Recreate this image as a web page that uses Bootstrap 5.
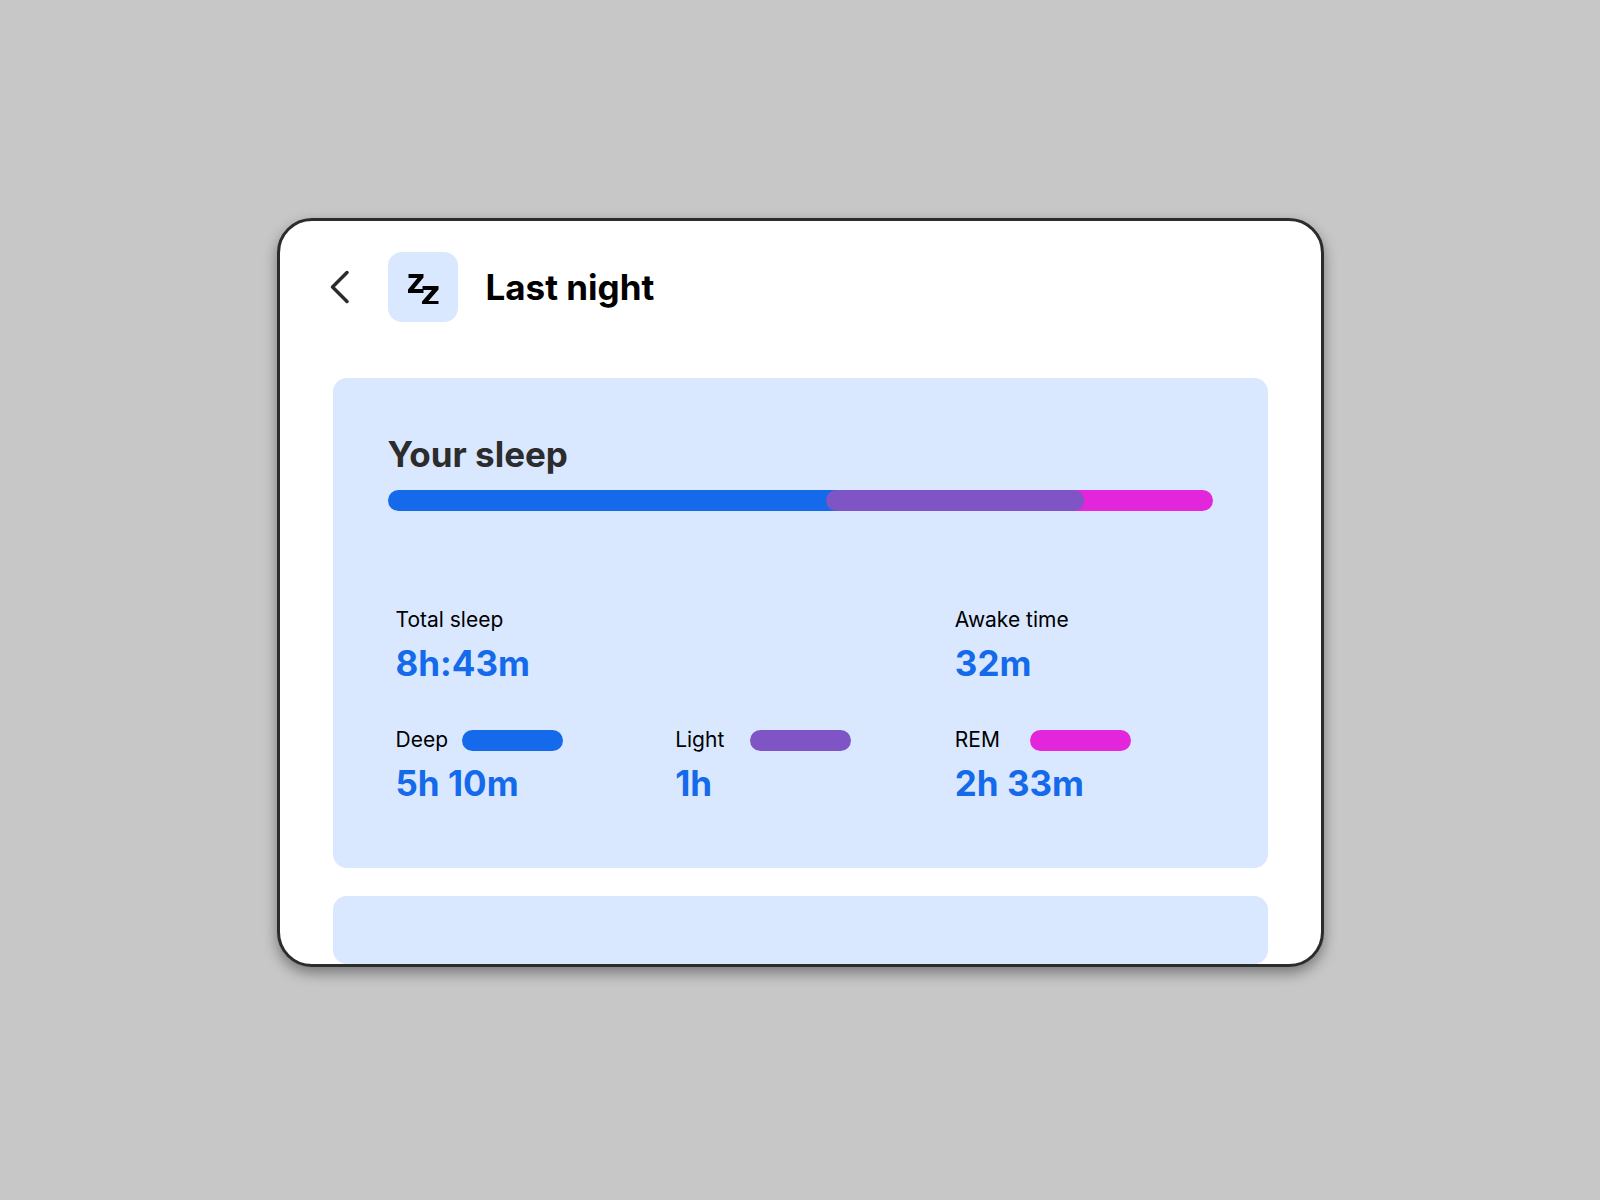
<!DOCTYPE html>
<html lang="en">
<head>
<meta charset="utf-8">
<meta name="viewport" content="width=device-width, initial-scale=1">
<title>Last night</title>
<link href="https://cdn.jsdelivr.net/npm/bootstrap@5.3.0/dist/css/bootstrap.min.css" rel="stylesheet">
<style>
  :root { --deep: #146aeb; --light: #7f54c4; --rem: #e326dc; --panel: #dae8ff; --ink: #2c2c2c; }
  body { background: #c7c7c7; color: #000; font-family: Inter, sans-serif; padding: 218px 16px 32px; }
  .device { max-width: 1047px; background: #fff; border: 3px solid var(--ink); border-radius: 35px; overflow: hidden; box-shadow: 0 6px 14px rgba(0,0,0,.4); }
  .topbar { padding: 31px 50px 56px; }
  .back { color: var(--ink); margin-right: 38px; line-height: 0; }
  .sleep-icon { width: 70px; height: 70px; border-radius: 14px; background: var(--panel); margin-right: 28px; }
  .heading { font-size: 35px; line-height: 40px; font-weight: 700; }
  .panels { padding: 0 53px; gap: 28px; }
  .panel { background: var(--panel); border-radius: 14px; }
  .panel-main { padding: 56px 55px 64px; }
  .panel-next { height: 68px; }
  .panel-title { color: var(--ink); }
  .stages { margin-top: 16px; height: 21px; }
  .pill { height: 21px; border-radius: 11px; }
  .stages .pill + .pill { margin-left: -24px; }
  .swatch { width: 101px; }
  .deep { background: var(--deep); }
  .light-stage { background: var(--light); z-index: 1; }
  .rem { background: var(--rem); }
  .stats { margin-top: 95px; margin-right: -22px; padding-left: 8px; row-gap: 42px; --bs-gutter-x: 0; }
  .stat-label { font-size: 21px; line-height: 28px; font-weight: 400; margin-bottom: 8px; }
  .stat-value { color: var(--deep); font-size: 35px; line-height: 42px; font-weight: 700; margin: 0; }
  .stat-name { margin-right: 14px; }
  .stat-name-wide { min-width: 61px; }
</style>
</head>
<body>
<main class="device mx-auto">
  <header class="topbar d-flex align-items-center">
    <button type="button" class="back btn p-0 border-0" aria-label="Back">
      <svg width="20" height="34" viewBox="0 0 20 34" fill="none" stroke="currentColor" stroke-width="3.500" stroke-linecap="round" stroke-linejoin="round" aria-hidden="true"><path d="M17 2.500 2.500 17 17 31.500"/></svg>
    </button>
    <div class="sleep-icon d-flex align-items-center justify-content-center flex-shrink-0">
      <svg width="34" height="34" viewBox="0 0 34 34" fill="#000" aria-hidden="true">
        <path d="M2.500 4H17.500V7.500L8 19H17.500V23H2V19.500L11.500 8H2.500Z"/><path d="M16.500 16H32.500V19.500L22.500 31H32.500V35H16V31.500L26 20H16.500Z"/>
      </svg>
    </div>
    <h1 class="heading m-0">Last night</h1>
  </header>
  <div class="panels d-flex flex-column">
    <section class="panel panel-main">
      <h2 class="heading panel-title m-0">Your sleep</h2>
      <div class="stages d-flex" role="img" aria-label="Sleep stages">
        <div class="pill deep flex-shrink-0" style="width: 56%"></div>
        <div class="pill light-stage flex-shrink-0" style="width: 31.3%"></div>
        <div class="pill rem flex-grow-1"></div>
      </div>
      <dl class="stats row mb-0">
        <div class="col-8">
          <dt class="stat-label">Total sleep</dt>
          <dd class="stat-value">8h:43m</dd>
        </div>
        <div class="col-4">
          <dt class="stat-label">Awake time</dt>
          <dd class="stat-value">32m</dd>
        </div>
        <div class="col-4">
          <dt class="stat-label d-flex align-items-center"><span class="stat-name">Deep</span><span class="pill swatch deep"></span></dt>
          <dd class="stat-value">5h 10m</dd>
        </div>
        <div class="col-4">
          <dt class="stat-label d-flex align-items-center"><span class="stat-name stat-name-wide">Light</span><span class="pill swatch light-stage"></span></dt>
          <dd class="stat-value">1h</dd>
        </div>
        <div class="col-4">
          <dt class="stat-label d-flex align-items-center"><span class="stat-name stat-name-wide">REM</span><span class="pill swatch rem"></span></dt>
          <dd class="stat-value">2h 33m</dd>
        </div>
      </dl>
    </section>
    <section class="panel panel-next"></section>
  </div>
</main>
<script src="https://cdn.jsdelivr.net/npm/bootstrap@5.3.0/dist/js/bootstrap.bundle.min.js"></script>
</body>
</html>
